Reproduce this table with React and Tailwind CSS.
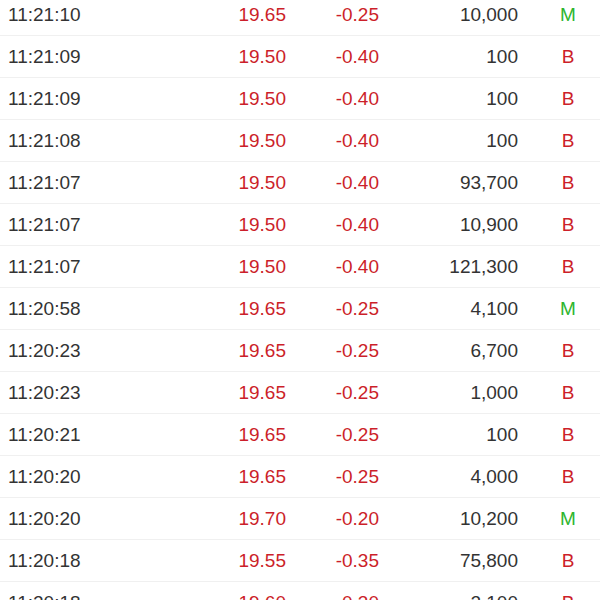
const trades = [
  ["11:21:10", "19.65", "-0.25", "10,000", "M"],
  ["11:21:09", "19.50", "-0.40", "100", "B"],
  ["11:21:09", "19.50", "-0.40", "100", "B"],
  ["11:21:08", "19.50", "-0.40", "100", "B"],
  ["11:21:07", "19.50", "-0.40", "93,700", "B"],
  ["11:21:07", "19.50", "-0.40", "10,900", "B"],
  ["11:21:07", "19.50", "-0.40", "121,300", "B"],
  ["11:20:58", "19.65", "-0.25", "4,100", "M"],
  ["11:20:23", "19.65", "-0.25", "6,700", "B"],
  ["11:20:23", "19.65", "-0.25", "1,000", "B"],
  ["11:20:21", "19.65", "-0.25", "100", "B"],
  ["11:20:20", "19.65", "-0.25", "4,000", "B"],
  ["11:20:20", "19.70", "-0.20", "10,200", "M"],
  ["11:20:18", "19.55", "-0.35", "75,800", "B"],
  ["11:20:18", "19.60", "-0.30", "2,100", "B"],
];

export default function App() {
  return (
    <div className="h-[600px] w-[600px] overflow-hidden bg-white font-['Liberation_Sans',Arial,sans-serif] text-[19px] text-[#333]">
      <div className="-mt-[6px]">
        {trades.map(([time, price, change, vol, side], i) => (
          <div
            key={i}
            className="flex h-[42px] items-center border-b border-[#f0f0f0] pt-[1px]"
          >
            <span className="w-[100px] shrink-0 pl-[8px]">{time}</span>
            <span className="w-[186px] shrink-0 text-right text-[#cc1f2a]">{price}</span>
            <span className="w-[93px] shrink-0 text-right text-[#cc1f2a]">{change}</span>
            <span className="w-[139px] shrink-0 text-right">{vol}</span>
            <span
              className={
                "w-[100px] shrink-0 text-center " +
                (side === "M" ? "text-[#2db52d]" : "text-[#cc1f2a]")
              }
            >
              {side}
            </span>
          </div>
        ))}
      </div>
    </div>
  );
}
